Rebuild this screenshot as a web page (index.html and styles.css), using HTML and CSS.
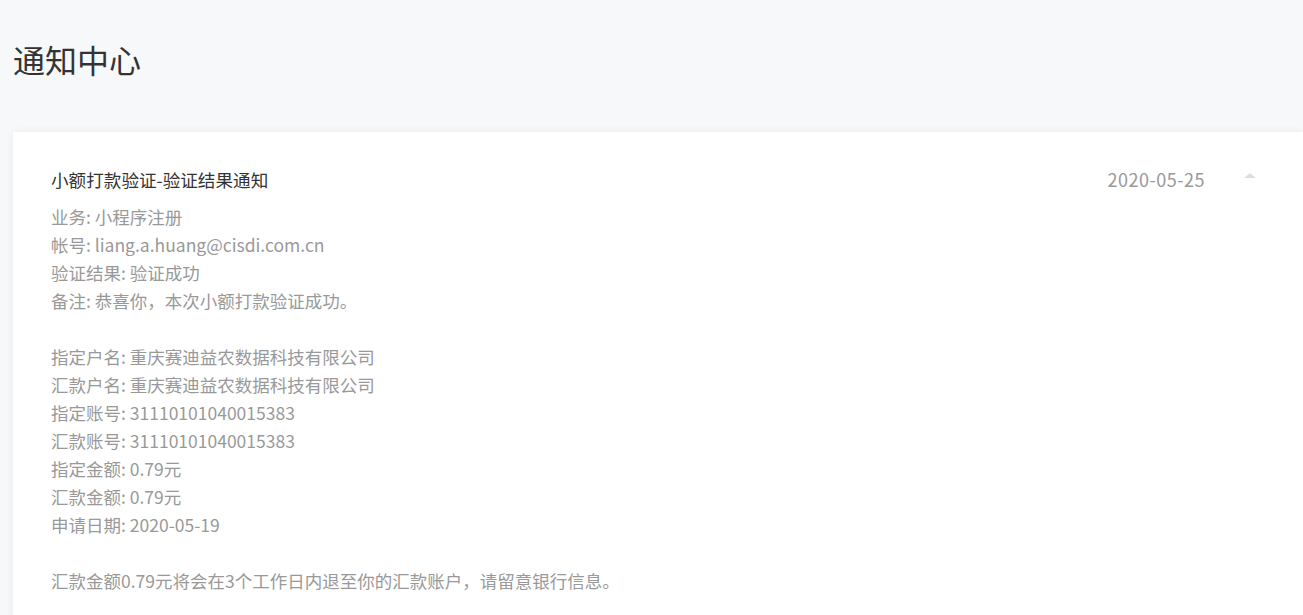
FILE: index.html
```html
<!DOCTYPE html>
<html lang="zh-CN">
<head>
<meta charset="utf-8">
<title>通知中心</title>
<link rel="stylesheet" href="styles.css">
</head>
<body>
<div class="page">
  <h1 class="page-title">通知中心</h1>
  <div class="card">
    <div class="item-head">
      <div class="item-title">小额打款验证-验证结果通知</div>
      <div class="item-date">2020-05-25</div>
      <div class="item-toggle"><span class="caret"></span></div>
    </div>
    <div class="item-body">
      <p>业务: 小程序注册</p>
      <p>帐号: liang.a.huang@cisdi.com.cn</p>
      <p>验证结果: 验证成功</p>
      <p>备注: 恭喜你，本次小额打款验证成功。</p>
      <p class="blank">&nbsp;</p>
      <p>指定户名: 重庆赛迪益农数据科技有限公司</p>
      <p>汇款户名: 重庆赛迪益农数据科技有限公司</p>
      <p>指定账号: 31110101040015383</p>
      <p>汇款账号: 31110101040015383</p>
      <p>指定金额: 0.79元</p>
      <p>汇款金额: 0.79元</p>
      <p>申请日期: 2020-05-19</p>
      <p class="blank">&nbsp;</p>
      <p>汇款金额0.79元将会在3个工作日内退至你的汇款账户，请留意银行信息。</p>
    </div>
  </div>
</div>
</body>
</html>
```
FILE: styles.css
```css
html, body {
  margin: 0;
  padding: 0;
  background: #f7f8fa;
  font-family: "Noto Sans CJK SC", "Noto Sans", sans-serif;
  overflow: hidden;
}
.page {
  padding: 37px 0 0 13px;
}
.page-title {
  margin: 0;
  font-size: 32px;
  font-weight: 400;
  color: #333;
  line-height: 44px;
}
.card {
  margin-top: 51px;
  background: #fff;
  box-shadow: 0 0 8px rgba(0, 0, 0, 0.06);
  padding: 33px 0 40px 38px;
  min-height: 600px;
}
.item-head {
  display: flex;
  align-items: center;
  height: 28px;
}
.item-title {
  flex: 1;
  font-size: 17.6px;
  color: #333;
}
.item-date {
  font-size: 18px;
  letter-spacing: 0.5px;
  color: #999;
}
.item-toggle {
  width: 40px;
  margin-left: 25px;
  margin-right: 33px;
  display: flex;
  justify-content: center;
  align-items: center;
  height: 28px;
  padding-bottom: 8px;
  box-sizing: border-box;
}
.caret {
  width: 0;
  height: 0;
  border-left: 6px solid transparent;
  border-right: 6px solid transparent;
  border-bottom: 5px solid #dcdfe6;
}
.item-body {
  margin-top: 10px;
}
.item-body p {
  margin: 0;
  font-size: 17.5px;
  line-height: 28px;
  color: #999;
}
```
